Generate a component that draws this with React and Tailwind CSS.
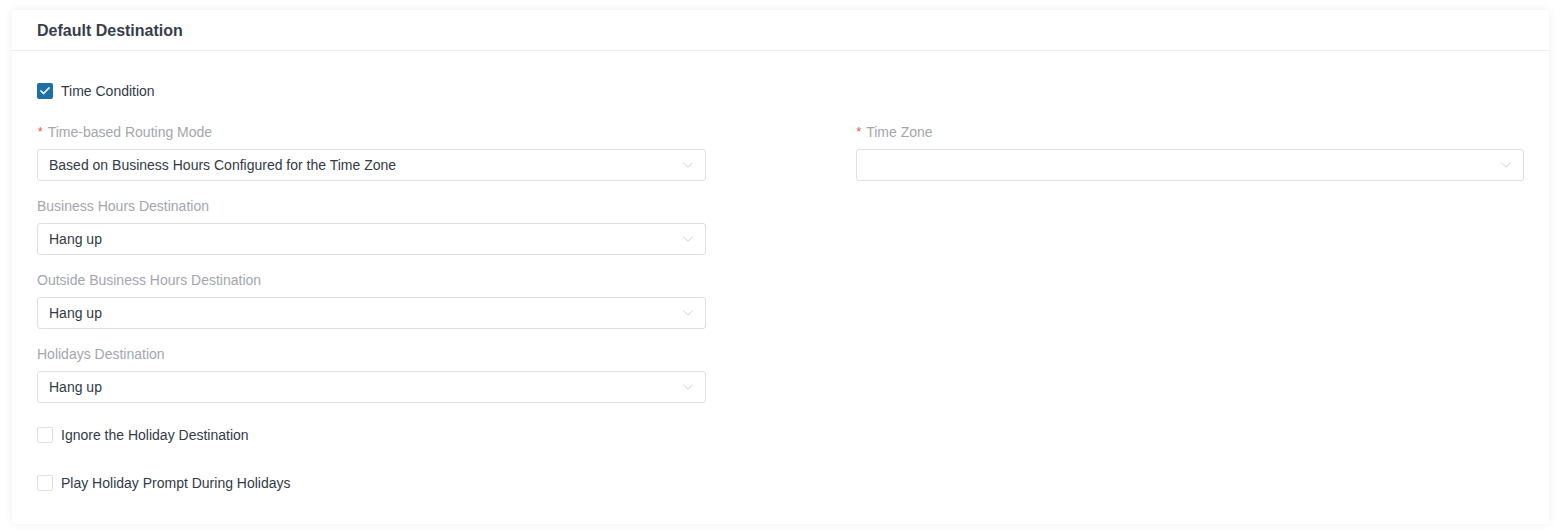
import { Check, ChevronDown } from "lucide-react";

const Select = ({ value }) => (
  <div className="h-8 w-full flex items-center justify-between border border-[#dcdfe6] rounded-[3px] bg-white pl-[11px] pr-[8px]">
    <span className="text-sm text-[#333a45]">{value}</span>
    <ChevronDown size={18} strokeWidth={1} className="text-[#c0c4cc]" />
  </div>
);

const Field = ({ label, required, value, className = "" }) => (
  <div className={className}>
    <div className="h-[22px] flex items-center text-sm text-[#a3a6ad] mb-[6px]">
      {required && <span className="text-[#f0493e] ml-px mr-[5px] text-xs">*</span>}
      {label}
    </div>
    <Select value={value} />
  </div>
);

const Checkbox = ({ checked, label }) => (
  <label className="flex items-center gap-2 h-4 text-sm text-[#333a45]">
    {checked ? (
      <span className="w-4 h-4 rounded-[2px] bg-[#1d6fa5] flex items-center justify-center">
        <Check size={12} strokeWidth={3.5} className="text-white" />
      </span>
    ) : (
      <span className="w-4 h-4 rounded-[2px] border border-[#dcdfe6] bg-white" />
    )}
    {label}
  </label>
);

export default function App() {
  return (
    <div className="min-h-screen bg-white px-3 pt-[10px] font-['Liberation_Sans',Arial,sans-serif]">
      <div className="rounded-[4px] bg-white shadow-[0_0_10px_rgba(0,0,0,0.07)]">
        <div className="h-[41px] flex items-center pt-[2px] px-[25px] border-b border-[#ebedf0]">
          <h2 className="text-base font-bold text-[#373d4a]">Default Destination</h2>
        </div>

        <div className="px-[25px] pt-[32px] pb-[33px]">
          <Checkbox checked label="Time Condition" />

          <div className="grid grid-cols-2 gap-x-[150px] mt-[22px]">
            <div className="flex flex-col gap-[14px]">
              <Field required label="Time-based Routing Mode" value="Based on Business Hours Configured for the Time Zone" />
              <Field label="Business Hours Destination" value="Hang up" />
              <Field label="Outside Business Hours Destination" value="Hang up" />
              <Field label="Holidays Destination" value="Hang up" />
            </div>
            <div>
              <Field required label="Time Zone" value="" />
            </div>
          </div>

          <div className="mt-6 flex flex-col gap-8">
            <Checkbox label="Ignore the Holiday Destination" />
            <Checkbox label="Play Holiday Prompt During Holidays" />
          </div>
        </div>
      </div>
    </div>
  );
}
